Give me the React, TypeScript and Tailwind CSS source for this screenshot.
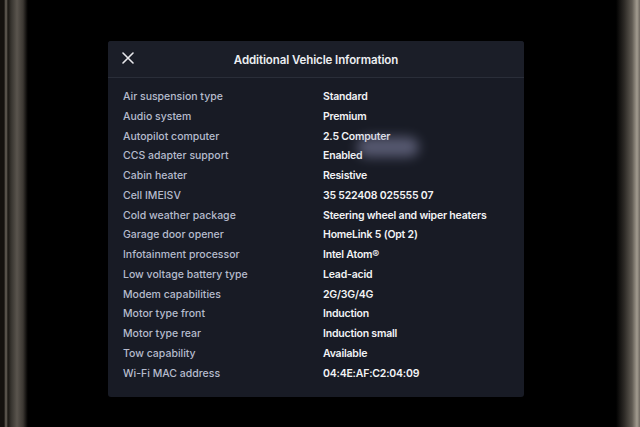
import React from "react";

const rows: [string, string][] = [
  ["Air suspension type", "Standard"],
  ["Audio system", "Premium"],
  ["Autopilot computer", "2.5 Computer"],
  ["CCS adapter support", "Enabled"],
  ["Cabin heater", "Resistive"],
  ["Cell IMEISV", "35 522408 025555 07"],
  ["Cold weather package", "Steering wheel and wiper heaters"],
  ["Garage door opener", "HomeLink 5 (Opt 2)"],
  ["Infotainment processor", "Intel Atom®"],
  ["Low voltage battery type", "Lead-acid"],
  ["Modem capabilities", "2G/3G/4G"],
  ["Motor type front", "Induction"],
  ["Motor type rear", "Induction small"],
  ["Tow capability", "Available"],
  ["Wi-Fi MAC address", "04:4E:AF:C2:04:09"],
];

export default function App() {
  return (
    <div
      className="flex h-[427px] w-[640px] overflow-hidden bg-black"
      style={{ fontFamily: "Inter, 'Noto Sans', sans-serif" }}
    >
      <div className="h-full w-[28px] bg-[linear-gradient(to_right,#14110e_0px,#14110e_4px,#6b655c_6px,#1b1814_8px,#36332e_11px,#5a554e_17px,#3c3833_23px,#0a0908_27px,#000_28px)]" />
      <div className="relative flex-1 pl-[80px] pt-[41px]">
        <div className="flex h-[356px] w-[416px] flex-col overflow-hidden rounded-[3px] bg-[#181b25]">
          <div className="flex h-[37px] items-center border-b border-[#2a2e39] bg-[#1b1e28] px-[14px]">
            <svg width="12" height="12" viewBox="0 0 12 12" className="mb-[3px]">
              <path d="M1 1 L11 11 M11 1 L1 11" stroke="#e8e8ec" strokeWidth="1.6" strokeLinecap="round" />
            </svg>
            <div className="-ml-[12px] flex-1 pt-[4px] text-center text-[11.5px] font-semibold tracking-[-0.1px] text-[#eceef2]">
              Additional Vehicle Information
            </div>
          </div>
          <div className="flex flex-col pl-[15px] pt-[9px]">
            {rows.map(([k, v]) => (
              <div key={k} className="flex h-[19.75px] items-center">
                <div className="w-[200px] text-[10.5px] font-medium text-[#b6bbcd]">{k}</div>
                <div className="text-[10.5px] font-semibold tracking-[-0.2px] text-[#f2f3f5]">{v}</div>
              </div>
            ))}
          </div>
        </div>
        <div className="pointer-events-none absolute left-[329px] top-[137px] h-[20px] w-[62px] rounded-full bg-[#8a8cae] opacity-55 blur-[6px]" />
      </div>
      <div className="h-full w-[40px] bg-[linear-gradient(to_right,#000_0px,#000_16px,#2c2925_24px,#5f5a52_32px,#a39c90_37px,#4a4540_42px,#1a1714_45px,#2a2622_50px)]" />
    </div>
  );
}
